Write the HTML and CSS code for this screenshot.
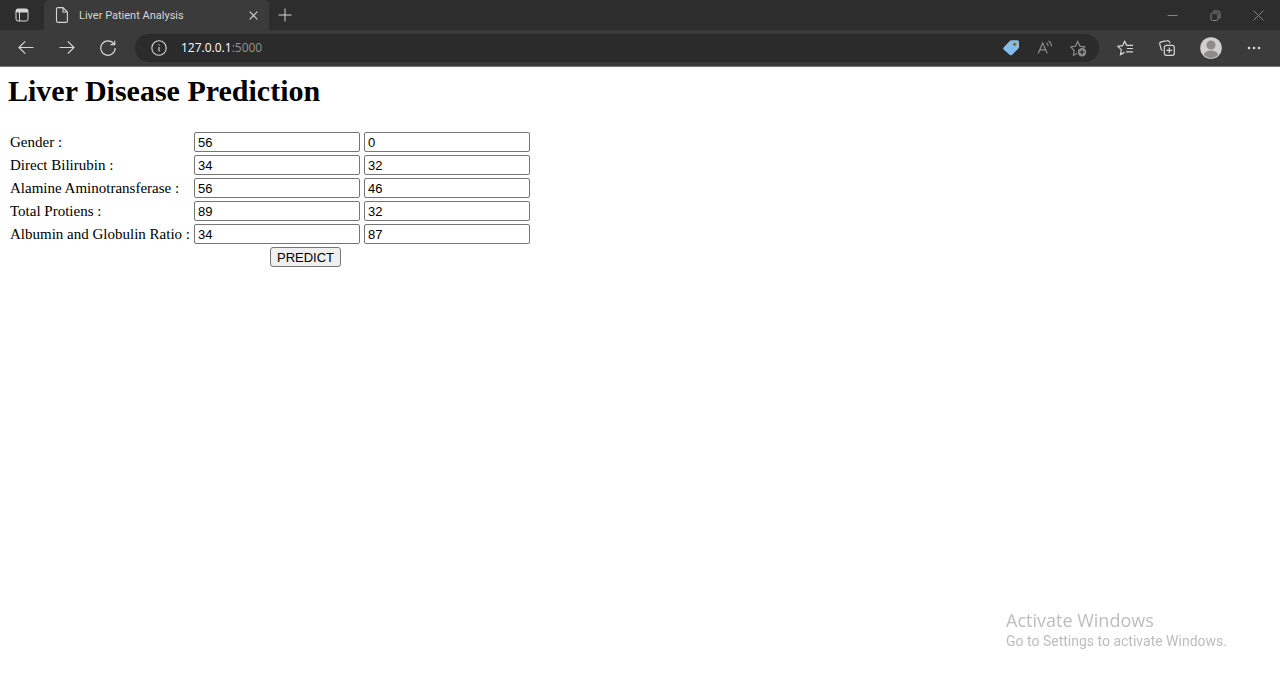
FILE: index.html
```
<!DOCTYPE html>
<html lang="en">
<head>
<meta charset="utf-8">
<meta name="viewport" content="width=device-width, initial-scale=1">
<title>Liver Patient Analysis</title>
<link rel="stylesheet" href="styles.css">
</head>
<body>
<header class="browser">
  <div class="tab-strip">
    <button class="icon-button tab-actions" type="button" aria-label="Tab actions">
      <svg width="14" height="14" viewBox="0 0 14 14" fill="none" stroke="currentColor"><rect x="1" y="1" width="12" height="12" rx="2"/><path d="M1.500 1.500h11v2.500h-11z" fill="currentColor"/><path d="M4.500 4v9"/></svg>
    </button>
    <div class="tab">
      <svg width="14" height="16" viewBox="0 0 14 16" fill="none" stroke="currentColor" stroke-width="1.100"><path d="M3 .6h5L12.400 5v8.900a1.500 1.500 0 0 1-1.500 1.500H3a1.500 1.500 0 0 1-1.500-1.500V2.100A1.500 1.500 0 0 1 3 .6zM8 .6V5h4.400"/></svg>
      <span class="tab-title">Liver Patient Analysis</span>
      <button class="icon-button" type="button" aria-label="Close tab">
        <svg width="9" height="9" viewBox="0 0 9 9" fill="none" stroke="currentColor" stroke-width="1.200"><path d="M.7.7l7.600 7.600M8.300.7L.7 8.300"/></svg>
      </button>
    </div>
    <button class="icon-button new-tab" type="button" aria-label="New tab">
      <svg width="14" height="14" viewBox="0 0 14 14" fill="none" stroke="currentColor"><path d="M7 .5v13M.5 7h13"/></svg>
    </button>
    <div class="window-controls">
      <button class="icon-button" type="button" aria-label="Minimize">
        <svg width="11" height="11" viewBox="0 0 11 11" fill="none" stroke="currentColor"><path d="M.5 5.500h10"/></svg>
      </button>
      <button class="icon-button" type="button" aria-label="Restore">
        <svg width="11" height="11" viewBox="0 0 11 11" fill="none" stroke="currentColor"><rect x="1" y="3" width="7" height="7.500" rx="1.500"/><path d="M3 1h4.500A2.500 2.500 0 0 1 10 3.500v5"/></svg>
      </button>
      <button class="icon-button" type="button" aria-label="Close">
        <svg width="11" height="11" viewBox="0 0 11 11" fill="none" stroke="currentColor"><path d="M.6.6l9.800 9.800M10.400.6L.6 10.400"/></svg>
      </button>
    </div>
  </div>
  <div class="toolbar">
    <div class="navigation">
      <button class="icon-button" type="button" aria-label="Back">
        <svg width="16" height="16" viewBox="0 0 16 16" fill="none" stroke="currentColor" stroke-width="1.200"><path d="M15.500 7.500H1M7.200 1.300L1 7.500l6.200 6.200"/></svg>
      </button>
      <button class="icon-button" type="button" aria-label="Forward">
        <svg width="16" height="16" viewBox="0 0 16 16" fill="none" stroke="currentColor" stroke-width="1.200"><path d="M.5 7.500H15M8.800 1.300L15 7.500l-6.200 6.200"/></svg>
      </button>
      <button class="icon-button" type="button" aria-label="Refresh">
        <svg width="16" height="16" viewBox="0 0 16 16" fill="none" stroke="currentColor" stroke-width="1.200"><path d="M15.200 8A7.200 7.200 0 1 1 13.800 3.800M14.700.7v4H10.500"/></svg>
      </button>
    </div>
    <div class="address-bar">
      <button class="icon-button" type="button" aria-label="Site information">
        <svg width="16" height="16" viewBox="0 0 16 16" fill="none" stroke="currentColor" stroke-width="1.100"><circle cx="8" cy="8" r="7.200"/><path d="M8 7v4.500M8 4.200v1.400"/></svg>
      </button>
      <span class="address"><span class="host">127.0.0.1</span>:5000</span>
      <button class="icon-button" type="button" aria-label="Shopping">
        <svg width="18" height="18" viewBox="0 0 18 18"><path d="M9.400 1.200h6a1.600 1.600 0 0 1 1.600 1.600v5.400c0 .6-.2 1-.6 1.400l-6.500 6.300c-.6.6-1.500.6-2.100 0L1.600 10.500c-.6-.6-.6-1.500 0-2.100l6.400-6.600c.4-.4.9-.6 1.400-.6z" fill="#83bdeb"/><circle cx="12.700" cy="5.300" r="2" fill="#a79c45"/><circle cx="12.700" cy="5.300" r=".9" fill="#343025"/></svg>
      </button>
      <button class="icon-button dim" type="button" aria-label="Read aloud">
        <svg width="16" height="16" viewBox="0 0 16 16" fill="none" stroke="currentColor" stroke-width="1.200"><path d="M1.200 13.500L5.700 3l4.500 10.500M2.800 9.800h5.800M9.500 2.800c1.100.9 1.600 2 1.600 3.400M11.500 1c1.900 1.300 3 3 3 5.500"/></svg>
      </button>
      <button class="icon-button dim" type="button" aria-label="Add to favorites">
        <svg width="17" height="17" viewBox="0 0 17 17" fill="none" stroke="currentColor" stroke-width="1.200"><path d="M7 13.500l-3.600 1.800.8-4.800L.7 6.900l4.800-.7L7.700 1.500l2.200 4.700 4.800.7-1.800 1.600"/><circle cx="12" cy="12.200" r="4.200" fill="currentColor" stroke="none"/><path d="M12 9.800v4.800M9.600 12.200h4.800" stroke="#2b2b2b"/></svg>
      </button>
    </div>
    <div class="tools">
      <button class="icon-button" type="button" aria-label="Favorites">
        <svg width="17" height="16" viewBox="0 0 17 16" fill="none" stroke="currentColor" stroke-width="1.200"><path d="M7.500 12.400l-4 2.200.8-4.900L.9 6.300l4.700-.7 2.100-4.300 1.900 4H16M10 8.500h6M9 11.800h7"/></svg>
      </button>
      <button class="icon-button" type="button" aria-label="Collections">
        <svg width="16" height="16" viewBox="0 0 16 16" fill="none" stroke="currentColor" stroke-width="1.200"><rect x="5.300" y="5.300" width="10" height="10" rx="2"/><path d="M10.300 7.500v5.600M7.500 10.300h5.600M3.500 10.500a2 2 0 0 1-1.500-1.600L.8 4.200A2 2 0 0 1 2.200 1.800l6-1.100a2 2 0 0 1 2.400 1.500l.3 1.100"/></svg>
      </button>
      <button class="icon-button" type="button" aria-label="Profile">
        <svg width="22" height="22" viewBox="0 0 22 22"><circle cx="11" cy="11" r="10.800" fill="#d2d0ce"/><circle cx="11" cy="8" r="4.600" fill="#8e8b89"/><path d="M3.600 17.500C5 14.800 7.800 13.600 11 13.600s6 1.200 7.400 3.900A10 10 0 0 1 11 21a10 10 0 0 1-7.400-3.500z" fill="#8e8b89"/></svg>
      </button>
      <button class="icon-button" type="button" aria-label="Settings and more">
        <svg width="14" height="4" viewBox="0 0 14 4" fill="currentColor"><circle cx="2" cy="2" r="1.300"/><circle cx="7" cy="2" r="1.300"/><circle cx="12" cy="2" r="1.300"/></svg>
      </button>
    </div>
  </div>
</header>
<main class="page">
  <h1 class="title">Liver Disease Prediction</h1>
  <form class="prediction-form">
    <label id="gender" for="gender-1">Gender :</label>
    <input class="field" id="gender-1" type="text" value="56">
    <input class="field" type="text" value="0" aria-labelledby="gender">
    <label id="bilirubin" for="bilirubin-1">Direct Bilirubin :</label>
    <input class="field" id="bilirubin-1" type="text" value="34">
    <input class="field" type="text" value="32" aria-labelledby="bilirubin">
    <label id="alamine" for="alamine-1">Alamine Aminotransferase :</label>
    <input class="field" id="alamine-1" type="text" value="56">
    <input class="field" type="text" value="46" aria-labelledby="alamine">
    <label id="protiens" for="protiens-1">Total Protiens :</label>
    <input class="field" id="protiens-1" type="text" value="89">
    <input class="field" type="text" value="32" aria-labelledby="protiens">
    <label id="ratio" for="ratio-1">Albumin and Globulin Ratio :</label>
    <input class="field" id="ratio-1" type="text" value="34">
    <input class="field" type="text" value="87" aria-labelledby="ratio">
    <button class="predict" type="button">PREDICT</button>
  </form>
</main>
<aside class="watermark">
  <p class="watermark-title">Activate Windows</p>
  <p class="watermark-text">Go to Settings to activate Windows.</p>
</aside>
</body>
</html>
```
FILE: styles.css
```
* {
  box-sizing: border-box;
}

body {
  margin: 0;
  background: #fff;
  color: #000;
  font-family: "Liberation Serif", serif;
}

.browser {
  color: #d6d6d6;
  background: #3b3b3b;
  border-bottom: 1px solid #777;
  font-family: "Open Sans", "Noto Sans", sans-serif;
}

.icon-button {
  display: flex;
  align-items: center;
  justify-content: center;
  flex: none;
  padding: 0;
  border: 0;
  background: none;
  color: inherit;
}

.tab-strip {
  display: flex;
  height: 30px;
  background: #2d2d2d;
}

.tab-actions {
  width: 44px;
}

.tab {
  display: flex;
  align-items: center;
  gap: 10px;
  width: 225px;
  padding: 0 11px;
  border-radius: 5px 5px 0 0;
  background: #3b3b3b;
}

.tab-title {
  flex: 1;
  font-family: Roboto, sans-serif;
  font-size: 11px;
  white-space: nowrap;
}

.new-tab {
  width: 32px;
}

.window-controls {
  display: flex;
  margin-left: auto;
  color: #858585;
}

.window-controls .icon-button {
  width: 43px;
}

.toolbar {
  display: flex;
  align-items: center;
  height: 36px;
}

.navigation {
  display: flex;
  gap: 25px;
  padding: 0 19px 0 18px;
}

.address-bar {
  display: flex;
  align-items: center;
  flex: 1;
  gap: 17px;
  height: 28px;
  padding: 0 12px 0 16px;
  border-radius: 14px;
  background: #2b2b2b;
}

.address {
  flex: 1;
  margin-left: -3px;
  color: #929292;
  font-size: 12px;
  line-height: 16px;
}

.host {
  color: #fff;
}

.dim {
  color: #8b8b8b;
}

.tools {
  display: flex;
  align-items: center;
  gap: 25px;
  padding: 0 19px 0 18px;
}

.page {
  padding: 8px;
}

.title {
  margin: 0 0 25px;
  font-size: 30px;
  line-height: 32px;
}

.prediction-form {
  display: grid;
  grid-template-columns: 180px 166px 166px;
  gap: 3px 4px;
  align-items: center;
  padding-left: 2px;
  font-size: 15px;
  line-height: 20px;
  white-space: nowrap;
}

.field {
  width: 100%;
  height: 20px;
  padding: 0 3px;
  border: 1px solid #767676;
  border-radius: 2px;
  background: #fff;
  color: #000;
  font: 13px "Liberation Sans", sans-serif;
}

.predict {
  grid-column: 2 / -1;
  justify-self: start;
  height: 20px;
  margin-left: 76px;
  padding: 0 6px;
  border: 1px solid #767676;
  border-radius: 3px;
  background: #efefef;
  color: #000;
  font: 13px "Liberation Sans", sans-serif;
}

.watermark {
  position: fixed;
  right: 53px;
  bottom: 28px;
  color: #bdbdbd;
  font-family: "Open Sans", sans-serif;
}

.watermark-title,
.watermark-text {
  margin: 0;
}

.watermark-title {
  font-size: 18px;
  line-height: 22px;
}

.watermark-text {
  font-family: Roboto, sans-serif;
  font-size: 14px;
  line-height: 20px;
}
```
